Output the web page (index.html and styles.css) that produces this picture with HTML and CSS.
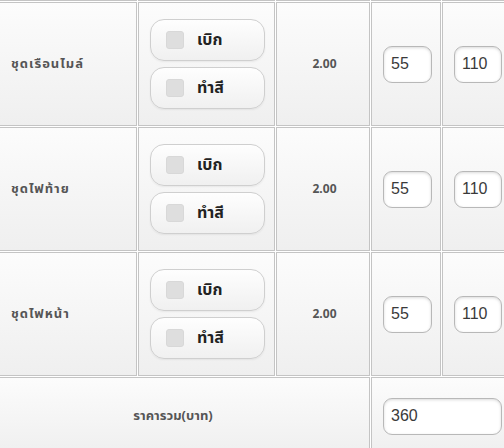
FILE: index.html
```html
<!DOCTYPE html>
<html lang="th">
<head>
    <meta charset="UTF-8">
    <meta name="viewport" content="width=device-width, initial-scale=1.0">
    <title>ราคาอะไหล่</title>
    <link rel="stylesheet" href="styles.css">
</head>
<body>

<table class="parts">
    <colgroup>
        <col class="c-name">
        <col class="c-opt">
        <col class="c-qty">
        <col class="c-price">
        <col class="c-sum">
    </colgroup>
    <tr class="item">
        <td class="name"></td>
        <td class="opts"></td>
        <td class="qty"></td>
        <td class="num"></td>
        <td class="num"></td>
    </tr>
    <tr class="item">
        <td class="name">ชุดเรือนไมล์</td>
        <td class="opts">
            <label class="opt"><input type="checkbox"><span>เบิก</span></label>
            <label class="opt"><input type="checkbox"><span>ทำสี</span></label>
        </td>
        <td class="qty">2.00</td>
        <td class="num"><input type="text" class="field" value="55"></td>
        <td class="num"><input type="text" class="field" value="110"></td>
    </tr>
    <tr class="item">
        <td class="name">ชุดไฟท้าย</td>
        <td class="opts">
            <label class="opt"><input type="checkbox"><span>เบิก</span></label>
            <label class="opt"><input type="checkbox"><span>ทำสี</span></label>
        </td>
        <td class="qty">2.00</td>
        <td class="num"><input type="text" class="field" value="55"></td>
        <td class="num"><input type="text" class="field" value="110"></td>
    </tr>
    <tr class="item">
        <td class="name">ชุดไฟหน้า</td>
        <td class="opts">
            <label class="opt"><input type="checkbox"><span>เบิก</span></label>
            <label class="opt"><input type="checkbox"><span>ทำสี</span></label>
        </td>
        <td class="qty">2.00</td>
        <td class="num"><input type="text" class="field" value="55"></td>
        <td class="num"><input type="text" class="field" value="110"></td>
    </tr>
    <tr class="total">
        <td class="total-label" colspan="3">ราคารวม(บาท)</td>
        <td class="num" colspan="2"><input type="text" class="field" value="360"></td>
    </tr>
</table>

</body>
</html>
```

FILE: styles.css
```css
body {
    margin: 0;
    font-family: Tahoma, "Noto Sans Thai", "DejaVu Sans", sans-serif;
    background-color: #fff;
    overflow: hidden;
}
.parts {
    border-collapse: separate;
    border-spacing: 1px;
    table-layout: fixed;
    width: 514px;
    margin: -124px 0 0 -2px;
}
.c-name { width: 138px; }
.c-opt { width: 137px; }
.c-qty { width: 94px; }
.c-price { width: 70px; }
.c-sum { width: 69px; }
.parts td {
    box-sizing: border-box;
    border: 1px solid #c4c4c4;
    background: linear-gradient(#fcfcfc, #efefef);
    padding: 0 8px 0 11px;
    vertical-align: middle;
}
.item td {
    height: 124px;
}
.total td {
    height: 78px;
}
.name {
    font-size: 13px;
    letter-spacing: 1px;
    font-weight: bold;
    color: #555;
}
.qty {
    font-size: 12px;
    font-weight: bold;
    color: #555;
    text-align: center;
}
.total-label {
    font-size: 13px;
    font-weight: bold;
    color: #555;
    text-align: center;
    padding-right: 34px !important;
}
.opt {
    display: flex;
    align-items: center;
    box-sizing: border-box;
    height: 42px;
    width: 115px;
    margin: 6px 0;
    padding-left: 15px;
    border: 1px solid #cfcfcf;
    border-radius: 14px;
    background: linear-gradient(#fefefe, #f0f0f0);
    box-shadow: 0 1px 2px rgba(0, 0, 0, 0.06);
    font-size: 16px;
    font-weight: bold;
    color: #222;
    cursor: pointer;
}
.opt input {
    -webkit-appearance: none;
    appearance: none;
    width: 18px;
    height: 18px;
    margin: 0 13px 0 0;
    border: 1px solid #d8d8d8;
    border-radius: 3px;
    background-color: #dedede;
}
.field {
    box-sizing: border-box;
    width: 100%;
    height: 37px;
    padding: 0 0 0 7px;
    border: 1px solid #b8b8b8;
    border-radius: 9px;
    background-color: #fff;
    box-shadow: inset 0 1px 3px rgba(0, 0, 0, 0.15);
    font-family: Arial, "Liberation Sans", sans-serif;
    font-size: 16px;
    color: #3a3a3a;
    outline: none;
}
```
